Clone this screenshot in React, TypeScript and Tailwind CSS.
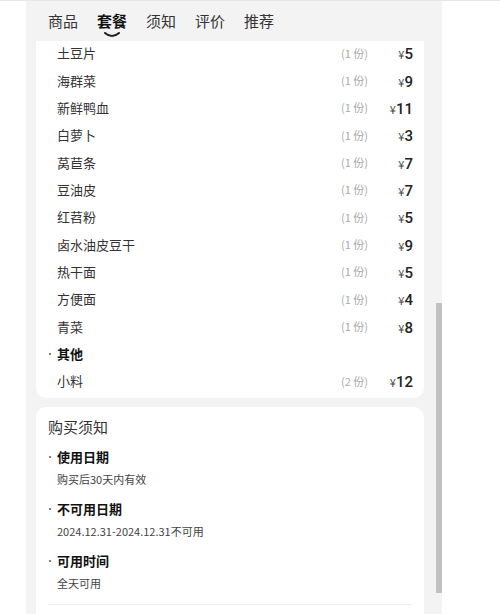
const font = { fontFamily: '"Noto Sans CJK SC", "Noto Sans", sans-serif' };

const tabs = ["商品", "套餐", "须知", "评价", "推荐"];

const dishes: [string, number, number][] = [
  ["土豆片", 1, 5],
  ["海群菜", 1, 9],
  ["新鲜鸭血", 1, 11],
  ["白萝卜", 1, 3],
  ["莴苣条", 1, 7],
  ["豆油皮", 1, 7],
  ["红苕粉", 1, 5],
  ["卤水油皮豆干", 1, 9],
  ["热干面", 1, 5],
  ["方便面", 1, 4],
  ["青菜", 1, 8],
];

const notices = [
  { title: "使用日期", text: "购买后30天内有效" },
  { title: "不可用日期", text: "2024.12.31-2024.12.31不可用" },
  { title: "可用时间", text: "全天可用" },
];

function Dot() {
  return (
    <span className="flex w-[9px] shrink-0 items-center">
      <span className="ml-[1px] h-[2px] w-[2px] rounded-full bg-[#555]" />
    </span>
  );
}

function Dish({ name, qty, price }: { name: string; qty: number; price: number }) {
  return (
    <div className="flex h-[27.33px] items-center pl-[9px]">
      <span className="flex-1 text-[13px] text-[#333]">{name}</span>
      <span className="text-[11px] text-[#aaa]">({qty} 份)</span>
      <span className="w-[45px] text-right text-[#222]">
        <span className="text-[11px] text-[#444]">¥</span>
        <span className="font-['Roboto'] text-[15px] font-medium">{price}</span>
      </span>
    </div>
  );
}

export default function App() {
  return (
    <div className="flex h-[614px] w-[500px] overflow-hidden border-t border-[#e6e6e6] bg-white" style={font}>
      <div className="w-[26px]" />
      <div className="flex w-[416px] flex-col bg-[#f3f3f3]">
        <div className="flex h-[40px] shrink-0 items-center gap-[19px] px-[22px] text-[15px] text-[#333]">
          {tabs.map((t) => (
            <div key={t} className="relative">
              <span className={t === "套餐" ? "font-bold text-[#111]" : ""}>{t}</span>
              {t === "套餐" && (
                <svg className="absolute left-[7px] top-[22px]" width="16" height="6" viewBox="0 0 16 6">
                  <path d="M1 1 Q8 7 15 1" fill="none" stroke="#222" strokeWidth="2" strokeLinecap="round" />
                </svg>
              )}
            </div>
          ))}
        </div>

        <div className="flex min-h-0 flex-1">
          <div className="flex w-[410px] flex-col gap-[9px] overflow-hidden pl-[10px] pr-[12px]">
            <div className="shrink-0 overflow-hidden rounded-b-[10px] bg-white pb-[3.5px] pl-[12px] pr-[11px]">
              <div className="-mt-[1.67px]">
                {dishes.map(([n, q, p]) => (
                  <Dish key={n} name={n} qty={q} price={p} />
                ))}
                <div className="flex h-[27.33px] items-center text-[13px] font-bold text-[#111]">
                  <Dot />
                  其他
                </div>
                <Dish name="小料" qty={2} price={12} />
              </div>
            </div>

            <div className="shrink-0 rounded-[10px] bg-white px-[12px] pt-[10px]">
              <div className="text-[15px] leading-[20px] text-[#333]">购买须知</div>
              {notices.map((n, i) => (
                <div key={n.title} className={i === 0 ? "mt-[10px]" : "mt-[12px]"}>
                  <div className="flex h-[20px] items-center text-[13px] font-bold text-[#111]">
                    <Dot />
                    {n.title}
                  </div>
                  <div className="mt-[4px] pl-[9px] text-[11px] leading-[16px] text-[#444]">{n.text}</div>
                </div>
              ))}
              <div className="mt-[13px] h-px bg-[#eeeeee]" />
              <div className="h-[40px]" />
            </div>
          </div>
          <div className="w-[6px]">
            <div className="mt-[262px] h-[290px] bg-[#c1c1c1]" />
          </div>
        </div>
      </div>
      <div className="flex-1" />
    </div>
  );
}
